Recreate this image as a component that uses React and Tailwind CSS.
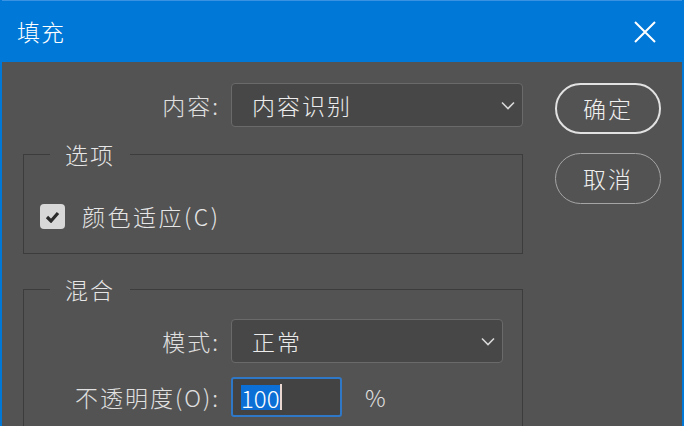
import React from 'react';

const font = { fontFamily: '"Noto Sans CJK SC", "Noto Sans", sans-serif' };

const Chevron = () => (
	<svg width="14" height="9" viewBox="0 0 14 9" fill="none">
		<polyline points="1,1.5 7,7.5 13,1.5" stroke="#d8d8d8" strokeWidth="1.6" />
	</svg>
);

const Select = ({ value, width }) => (
	<div className={`flex h-[44px] items-center justify-between rounded-[4px] border border-[#6a6a6a] bg-[#474747] pl-[20px] pr-[7px] ${width}`}>
		<span className="text-[23px] tracking-[2px] text-[#ececec]">{value}</span>
		<Chevron />
	</div>
);

const Fill = () => {
	return (
		<div className="flex h-[426px] w-[692px] overflow-hidden bg-white font-light" style={font}>
			<div className="flex h-full w-[684px] flex-col border-l-2 border-r-2 border-[#0078d7] bg-[#535353]">
				<div className="flex h-[62px] shrink-0 items-center justify-between border-t border-[#3a93e2] bg-[#0078d7] pl-[15px] pr-[26px]">
					<span className="text-[23px] leading-none tracking-[1px] text-white">填充</span>
					<svg width="22" height="22" viewBox="0 0 22 22" fill="none">
						<path d="M1 1 L21 21 M21 1 L1 21" stroke="#ffffff" strokeWidth="2" />
					</svg>
				</div>

				<div className="flex pl-[21px] pt-[21px]">
					<div className="w-[500px]">
						<div className="flex h-[44px] items-center">
							<span className="w-[197px] text-right text-[23px] tracking-[2px] text-[#e0e0e0]">内容:</span>
							<div className="ml-[11px]">
								<Select value="内容识别" width="w-[292px]" />
							</div>
						</div>

						<fieldset className="mt-[11px] h-[116px] border border-[#3c3c3c]">
							<legend className="ml-[26px] px-[15px] text-[23px] leading-[32px] tracking-[2px] text-[#e6e6e6]">选项</legend>
							<div className="mt-[34px] flex h-[25px] items-center pl-[16px]">
								<div className="flex h-[25px] w-[25px] items-center justify-center rounded-[4px] bg-[#d8d8d8]">
									<svg width="15" height="12" viewBox="0 0 15 12" fill="none">
										<polyline points="2,6 6,10 13,2" stroke="#2b2b2b" strokeWidth="3.2" />
									</svg>
								</div>
								<span className="ml-[17px] text-[23px] tracking-[2.5px] text-[#e6e6e6]">颜色适应(C)</span>
							</div>
						</fieldset>

						<fieldset className="mt-[19px] h-[200px] border border-[#3c3c3c]">
							<legend className="ml-[26px] px-[15px] text-[23px] leading-[32px] tracking-[2px] text-[#e6e6e6]">混合</legend>
							<div className="mt-[14px] flex h-[44px] items-center">
								<span className="w-[196px] text-right text-[23px] tracking-[2px] text-[#e0e0e0]">模式:</span>
								<div className="ml-[11px]">
									<Select value="正常" width="w-[272px]" />
								</div>
							</div>
							<div className="mt-[14px] flex h-[40px] items-center">
								<span className="w-[196px] text-right text-[23px] tracking-[2px] text-[#e0e0e0]">不透明度(O):</span>
								<div className="ml-[11px] flex h-[40px] w-[111px] items-center rounded-[3px] border-2 border-[#2f78c8] bg-[#434343] pl-[8px]">
									<span className="bg-[#0b6fd6] text-[24px] leading-[25px] text-white">100</span>
									<span className="h-[26px] w-[2px] bg-[#e9d7d0]"></span>
								</div>
								<span className="ml-[23px] text-[23px] text-[#e0e0e0]">%</span>
							</div>
						</fieldset>
					</div>

					<div className="ml-[32px] flex flex-col">
						<button className="flex h-[51px] w-[106px] items-center justify-center rounded-full border-2 border-[#e2e2e2] text-[23px] tracking-[2px] text-[#f0f0f0]">
							确定
						</button>
						<button className="mt-[19px] flex h-[51px] w-[106px] items-center justify-center rounded-full border border-[#a5a5a5] text-[23px] tracking-[2px] text-[#f0f0f0]">
							取消
						</button>
					</div>
				</div>
			</div>
		</div>
	);
};

export default Fill;
